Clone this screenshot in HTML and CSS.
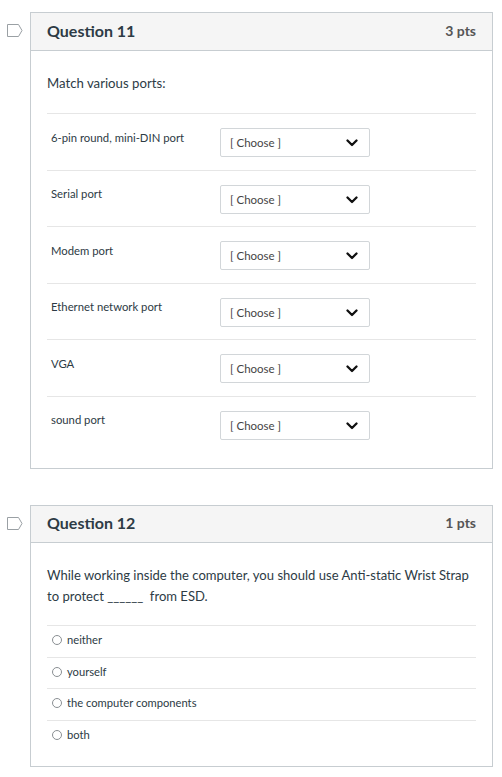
FILE: index.html
```html
<!DOCTYPE html>
<html>
<head>
<meta charset="utf-8">
<link rel="stylesheet" href="styles.css">
</head>
<body>
<div class="page">
  <div class="question q11">
    <div class="flag-col">
      <svg class="flag" width="16" height="13" viewBox="0 0 16 13"><path d="M0.5 0.5 H11.5 L15 6.5 L11.5 12.5 H0.5 Z" fill="#fff" stroke="#9aa0a4" stroke-width="1"/></svg>
    </div>
    <div class="box">
      <div class="header">
        <span class="title">Question 11</span>
        <span class="pts">3 pts</span>
      </div>
      <div class="body">
        <div class="prompt">Match various ports:</div>
        <div class="match-rows">
          <div class="mrow"><div class="mlabel">6-pin round, mini-DIN port</div><div class="select"><span>[ Choose ]</span><svg width="12" height="8" viewBox="0 0 12 8"><path d="M1.5 1.5 L6 6 L10.5 1.5" fill="none" stroke="#111" stroke-width="2.3" stroke-linecap="round" stroke-linejoin="round"/></svg></div></div>
          <div class="mrow"><div class="mlabel">Serial port</div><div class="select"><span>[ Choose ]</span><svg width="12" height="8" viewBox="0 0 12 8"><path d="M1.5 1.5 L6 6 L10.5 1.5" fill="none" stroke="#111" stroke-width="2.3" stroke-linecap="round" stroke-linejoin="round"/></svg></div></div>
          <div class="mrow"><div class="mlabel">Modem port</div><div class="select"><span>[ Choose ]</span><svg width="12" height="8" viewBox="0 0 12 8"><path d="M1.5 1.5 L6 6 L10.5 1.5" fill="none" stroke="#111" stroke-width="2.3" stroke-linecap="round" stroke-linejoin="round"/></svg></div></div>
          <div class="mrow"><div class="mlabel">Ethernet network port</div><div class="select"><span>[ Choose ]</span><svg width="12" height="8" viewBox="0 0 12 8"><path d="M1.5 1.5 L6 6 L10.5 1.5" fill="none" stroke="#111" stroke-width="2.3" stroke-linecap="round" stroke-linejoin="round"/></svg></div></div>
          <div class="mrow"><div class="mlabel">VGA</div><div class="select"><span>[ Choose ]</span><svg width="12" height="8" viewBox="0 0 12 8"><path d="M1.5 1.5 L6 6 L10.5 1.5" fill="none" stroke="#111" stroke-width="2.3" stroke-linecap="round" stroke-linejoin="round"/></svg></div></div>
          <div class="mrow"><div class="mlabel">sound port</div><div class="select"><span>[ Choose ]</span><svg width="12" height="8" viewBox="0 0 12 8"><path d="M1.5 1.5 L6 6 L10.5 1.5" fill="none" stroke="#111" stroke-width="2.3" stroke-linecap="round" stroke-linejoin="round"/></svg></div></div>
        </div>
      </div>
    </div>
  </div>

  <div class="question q12">
    <div class="flag-col">
      <svg class="flag" width="16" height="13" viewBox="0 0 16 13"><path d="M0.5 0.5 H11.5 L15 6.5 L11.5 12.5 H0.5 Z" fill="#fff" stroke="#9aa0a4" stroke-width="1"/></svg>
    </div>
    <div class="box">
      <div class="header">
        <span class="title">Question 12</span>
        <span class="pts">1 pts</span>
      </div>
      <div class="body">
        <div class="prompt long">While working inside the computer, you should use Anti-static Wrist Strap to protect ______&nbsp; from ESD.</div>
        <div class="answers">
          <div class="arow"><span class="radio"></span><span>neither</span></div>
          <div class="arow"><span class="radio"></span><span>yourself</span></div>
          <div class="arow"><span class="radio"></span><span>the computer components</span></div>
          <div class="arow"><span class="radio"></span><span>both</span></div>
        </div>
      </div>
    </div>
  </div>
</div>
</body>
</html>
```

FILE: styles.css
```css
* { box-sizing: border-box; }
html, body { margin: 0; padding: 0; background: #fff; }
body {
  font-family: Lato, "Noto Sans", sans-serif;
  color: #2d3b45;
}
.page {
  padding-top: 12px;
  padding-right: 9px;
}
.question {
  display: flex;
}
.q12 { margin-top: 36px; }
.flag-col {
  width: 30px;
  flex: none;
}
.flag {
  display: block;
  margin: 12px 0 0 7px;
}
.box {
  flex: 1;
  border: 1px solid #c7cdd1;
  background: #fff;
}
.header {
  display: flex;
  justify-content: space-between;
  align-items: center;
  height: 38px;
  padding: 0 16px 3px 16px;
  background: #f5f5f5;
  border-bottom: 1px solid #c7cdd1;
}
.q12 .header { height: 37px; }
.title {
  font-size: 16px;
  font-weight: 700;
  color: #2d3b45;
}
.pts {
  font-size: 14px;
  font-weight: 700;
  color: #555;
}
.body {
  padding: 22px 16px 0 16px;
}
.q11 .body { padding-bottom: 16px; }
.q12 .body { padding-bottom: 15px; }
.prompt {
  font-size: 13.2px;
  line-height: 20px;
  color: #2d3b45;
  margin-bottom: 20px;
}
.prompt.long {
  font-size: 13.05px;
  line-height: 21px;
  margin-bottom: 18px;
}
.mrow {
  display: flex;
  align-items: flex-start;
  border-top: 1px solid #e6e6e6;
  padding: 14px 0 12.5px 0;
}
.mlabel {
  width: 173px;
  flex: none;
  padding: 1.5px 0 0 4px;
  font-size: 11.3px;
  line-height: 16px;
  color: #2d3b45;
}
.select {
  width: 150px;
  height: 29px;
  border: 1px solid #d2d6d9;
  border-radius: 2px;
  display: flex;
  align-items: center;
  justify-content: space-between;
  padding: 0 11px 0 9px;
  font-size: 11.5px;
  color: #444;
  background: #fff;
}
.select svg { display: block; margin-top: 1px; }
.arow {
  display: flex;
  align-items: center;
  border-top: 1px solid #e6e6e6;
  padding: 6px 0 8.5px 5px;
  font-size: 11.2px;
  line-height: 16px;
  color: #2d3b45;
}
.radio {
  width: 10px;
  height: 10px;
  border: 1px solid #8a8f93;
  border-radius: 50%;
  margin-right: 5px;
  flex: none;
}
```
